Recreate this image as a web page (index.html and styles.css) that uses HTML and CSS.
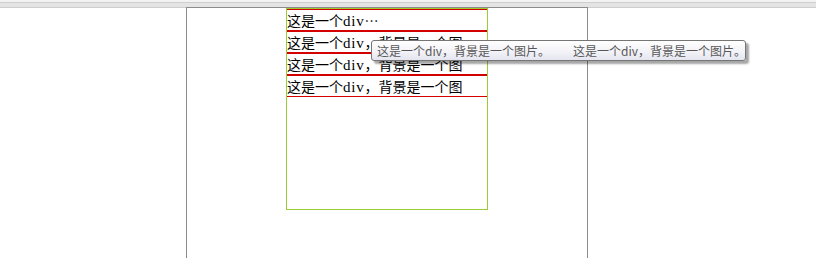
FILE: index.html
```html
<!DOCTYPE html>
<html lang="zh-CN">
<head>
<meta charset="utf-8">
<title>div</title>
<link rel="stylesheet" href="styles.css">
</head>
<body>
<div class="chrome"></div>
<div class="page">
  <div class="box">
    <div class="row">这是一个<span class="lat">div</span>…</div>
    <div class="row">这是一个<span class="lat">div</span>，背景是一个图片。</div>
    <div class="row">这是一个<span class="lat">div</span>，背景是一个图片。</div>
    <div class="row">这是一个<span class="lat">div</span>，背景是一个图片。</div>
  </div>
</div>
<div class="tooltip"><span>这是一个div，背景是一个图片。</span><span>这是一个div，背景是一个图片。</span></div>
</body>
</html>
```
FILE: styles.css
```css
html, body {
  margin: 0;
  padding: 0;
  background: #ffffff;
  overflow: hidden;
}
body {
  width: 816px;
  height: 258px;
  font-family: "Noto Sans CJK SC", sans-serif;
}
.chrome {
  height: 8px;
  background: linear-gradient(to bottom,
    #f3f3f3 0, #f3f3f3 2px,
    #cfcfcf 2px, #cfcfcf 3px,
    #e4e4e4 3px, #e4e4e4 7px,
    #cdcdcd 7px, #cdcdcd 8px);
}
.page {
  margin-left: 186px;
  margin-top: -1px;
  width: 400px;
  height: 260px;
  border: 1px solid #8c8c8c;
  border-bottom: none;
}
.box {
  margin-left: 99px;
  width: 200px;
  height: 200px;
  border: 1px solid #9acd32;
}
.row {
  height: 20px;
  line-height: 20px;
  border-top: 1px solid #d40000;
  border-bottom: 1px solid #d40000;
  overflow: hidden;
  font-size: 14px;
  color: #000;
  line-break: strict;
}
.lat {
  font-family: "Liberation Serif", serif;
  font-size: 15px;
  letter-spacing: 0.8px;
}
.tooltip {
  position: absolute;
  left: 371px;
  top: 40px;
  width: 364px;
  height: 19px;
  padding: 0 4px 0 5px;
  border: 1px solid #767676;
  border-radius: 3px;
  background: linear-gradient(to bottom, #ffffff 0%, #f3f3f8 55%, #e4e5ef 100%);
  box-shadow: 3px 3px 2px rgba(0, 0, 0, 0.35);
  font-size: 12px;
  line-height: 19px;
  color: #575757;
  display: flex;
  gap: 23px;
  white-space: nowrap;
}
```
